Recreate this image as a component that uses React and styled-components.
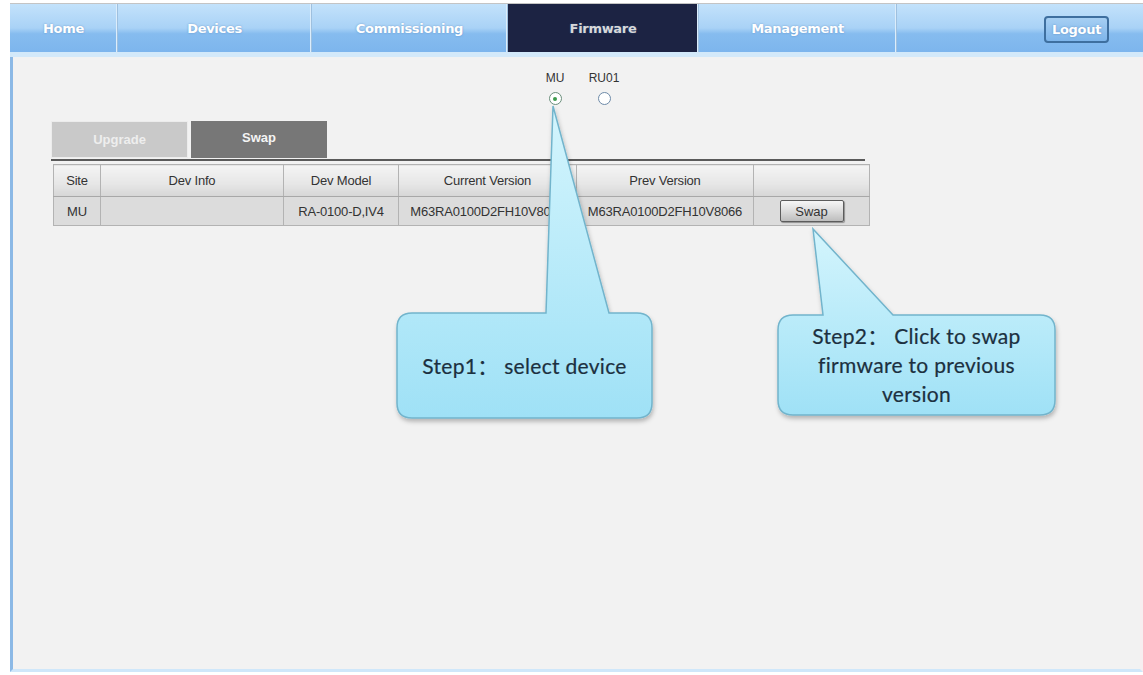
import React, { useState } from 'react';
import styled, { createGlobalStyle } from 'styled-components';

const GlobalStyle = createGlobalStyle`
  html, body {
    margin: 0;
    padding: 0;
    background: #ffffff;
  }
`;

const Page = styled.div`
  position: relative;
  width: 1143px;
  height: 675px;
  overflow: hidden;
  padding-top: 3px;
  box-sizing: border-box;
  font-family: "Liberation Sans", Arial, sans-serif;
`;

const NavBar = styled.div`
  display: flex;
  height: 48px;
  margin-left: 10px;
  border-top: 1px solid #c4c4c4;
  background: linear-gradient(#c3e2fb 0%, #a9d2f6 50%, #86bcef 62%, #7db5ed 100%);
`;

const NavItem = styled.div`
  width: ${p => p.w}px;
  display: flex;
  align-items: center;
  justify-content: center;
  border-right: 1px solid #9ec0df;
  box-shadow: inset -1px 0 0 #dcedfb;
  font-family: "DejaVu Sans", Verdana, sans-serif;
  font-weight: bold;
  font-size: 13px;
  letter-spacing: -0.3px;
  color: ${p => (p.active ? '#d8d8d8' : '#ffffff')};
  background: ${p => (p.active ? '#1c2343' : 'transparent')};
  text-shadow: 0 0 2px rgba(60, 110, 170, 0.6);
`;

const NavRest = styled.div`
  flex: 1;
  display: flex;
  align-items: center;
  justify-content: flex-end;
  padding-right: 34px;
`;

const LogoutButton = styled.button`
  width: 65px;
  height: 27px;
  border: 2px solid #3e6f9f;
  border-radius: 4px;
  background: linear-gradient(#a6cff3, #7eb5ea);
  color: #ffffff;
  font-family: "DejaVu Sans", Verdana, sans-serif;
  font-weight: bold;
  font-size: 13px;
  letter-spacing: -0.3px;
  padding: 0;
  text-shadow: 0 0 2px rgba(60, 110, 170, 0.6);
  margin-top: 2px;
`;

const Strip = styled.div`
  height: 5px;
  margin-left: 10px;
  background: #d3e9fa;
`;

const Panel = styled.div`
  margin-left: 10px;
  height: 615px;
  box-sizing: border-box;
  background: #f2f2f2;
  border-left: 3px solid #8cb9e6;
  border-right: 3px solid #f7eef0;
  border-bottom: 3px solid #cfe7fa;
  padding: 14px 0 0 38px;
  display: flex;
  flex-direction: column;
`;

const RadioGroup = styled.div`
  display: flex;
  gap: 19px;
  margin-left: 489px;
`;

const RadioOption = styled.label`
  width: 30px;
  display: flex;
  flex-direction: column;
  align-items: center;
  gap: 7px;
  font-size: 12px;
  color: #333;
  cursor: pointer;
`;

const RadioCircle = styled.span`
  width: 11px;
  height: 11px;
  border-radius: 50%;
  border: 1.5px solid ${p => (p.checked ? '#6b8f7c' : '#6d8aa8')};
  background: #ffffff;
  display: flex;
  align-items: center;
  justify-content: center;

  &::after {
    content: '';
    width: 4px;
    height: 4px;
    border-radius: 50%;
    background: ${p => (p.checked ? '#3d9a4c' : 'transparent')};
  }
`;

const TabRow = styled.div`
  display: flex;
  gap: 3px;
  margin-top: 16px;
  height: 37px;
`;

const Tab = styled.div`
  width: ${p => p.w}px;
  display: flex;
  align-items: center;
  justify-content: center;
  font-weight: bold;
  font-size: 13px;
  color: ${p => (p.active ? '#f4f4f4' : '#eeeeee')};
  background: ${p => (p.active ? '#777777' : '#c9c9c9')};
  box-sizing: border-box;
  border: ${p => (p.active ? 'none' : '1px solid #ececec')};
  padding-bottom: ${p => (p.active ? '4px' : '0')};
  cursor: pointer;
`;

const TabLine = styled.div`
  width: 814px;
  height: 2px;
  background: #5a5a5a;
  margin-top: 1px;
`;

const Table = styled.table`
  margin: 3px 0 0 2px;
  width: 816px;
  border-collapse: collapse;
  table-layout: fixed;
  font-size: 13px;
  letter-spacing: -0.2px;
  color: #333;
  border: 1px solid #b0b0b0;
`;

const Th = styled.th`
  height: 31px;
  font-weight: normal;
  background: linear-gradient(#f4f4f4, #e6e6e6 60%, #d6d6d6);
  border: 1px solid #b3b3b3;
  border-bottom: 1px solid #a8a8a8;
  padding: 0;
`;

const Td = styled.td`
  height: 28px;
  background: #dcdcdc;
  border: 1px solid #b3b3b3;
  text-align: center;
  padding: 0;
  white-space: nowrap;
  overflow: hidden;
`;

const SwapButton = styled.button`
  width: 64px;
  height: 22px;
  border: 1px solid #5c5c5c;
  border-radius: 2px;
  background: linear-gradient(#f6f6f6, #dcdcdc 50%, #bdbdbd);
  box-shadow: 1px 1px 1px rgba(0, 0, 0, 0.35);
  font-family: "Liberation Sans", Arial, sans-serif;
  font-size: 13px;
  color: #333;
  padding: 0;
  cursor: pointer;
`;

const Callout = styled.div`
  position: absolute;
  left: 0;
  top: 0;
  width: 1143px;
  height: 675px;
  pointer-events: none;
`;

const CalloutText = styled.div`
  position: absolute;
  left: ${p => p.x}px;
  top: ${p => p.y}px;
  width: ${p => p.w}px;
  height: ${p => p.h}px;
  display: flex;
  align-items: center;
  justify-content: center;
  text-align: center;
  font-family: Lato, "Open Sans", "Noto Sans CJK SC", sans-serif;
  font-size: 21px;
  line-height: 29px;
  color: #1c3040;
  letter-spacing: 0.3px;
  -webkit-text-stroke: 0.2px #1c3040;
`;

const navItems = [
  { label: 'Home', w: 107 },
  { label: 'Devices', w: 193 },
  { label: 'Commissioning', w: 195 },
  { label: 'Firmware', w: 190, active: true },
  { label: 'Management', w: 197 },
];

const row = {
  site: 'MU',
  info: '',
  model: 'RA-0100-D,IV4',
  current: 'M63RA0100D2FH10V8066',
  prev: 'M63RA0100D2FH10V8066',
};

const balloon = (x1, y1, x2, y2, r, b1, b2, tx, ty) =>
  `M ${x1 + r},${y1} L ${b1},${y1} L ${tx},${ty} L ${b2},${y1} L ${x2 - r},${y1} ` +
  `Q ${x2},${y1} ${x2},${y1 + r} L ${x2},${y2 - r} Q ${x2},${y2} ${x2 - r},${y2} ` +
  `L ${x1 + r},${y2} Q ${x1},${y2} ${x1},${y2 - r} L ${x1},${y1 + r} Q ${x1},${y1} ${x1 + r},${y1} Z`;

const App = () => {
  const [device, setDevice] = useState('MU');
  const [tab, setTab] = useState('Swap');

  return (
    <Page>
      <GlobalStyle />
      <NavBar>
        {navItems.map(item => (
          <NavItem key={item.label} w={item.w} active={item.active}>
            {item.label}
          </NavItem>
        ))}
        <NavRest>
          <LogoutButton>Logout</LogoutButton>
        </NavRest>
      </NavBar>
      <Strip />
      <Panel>
        <RadioGroup>
          {['MU', 'RU01'].map(d => (
            <RadioOption key={d} onClick={() => setDevice(d)}>
              {d}
              <RadioCircle checked={device === d} />
            </RadioOption>
          ))}
        </RadioGroup>
        <TabRow>
          <Tab w={137} active={tab === 'Upgrade'} onClick={() => setTab('Upgrade')}>Upgrade</Tab>
          <Tab w={136} active={tab === 'Swap'} onClick={() => setTab('Swap')}>Swap</Tab>
        </TabRow>
        <TabLine />
        <Table>
          <colgroup>
            <col style={{ width: 47 }} />
            <col style={{ width: 183 }} />
            <col style={{ width: 115 }} />
            <col style={{ width: 178 }} />
            <col style={{ width: 177 }} />
            <col style={{ width: 116 }} />
          </colgroup>
          <thead>
            <tr>
              <Th>Site</Th>
              <Th>Dev Info</Th>
              <Th>Dev Model</Th>
              <Th>Current Version</Th>
              <Th>Prev Version</Th>
              <Th />
            </tr>
          </thead>
          <tbody>
            <tr>
              <Td>{row.site}</Td>
              <Td>{row.info}</Td>
              <Td>{row.model}</Td>
              <Td>{row.current}</Td>
              <Td>{row.prev}</Td>
              <Td><SwapButton>Swap</SwapButton></Td>
            </tr>
          </tbody>
        </Table>
      </Panel>

      <Callout>
        <svg width="1143" height="675">
          <defs>
            <linearGradient id="bl" x1="0" y1="0" x2="0" y2="1">
              <stop offset="0" stopColor="#d4f5fd" />
              <stop offset="1" stopColor="#9fe1f6" />
            </linearGradient>
            <filter id="sh" x="-10%" y="-10%" width="120%" height="130%">
              <feDropShadow dx="1" dy="3" stdDeviation="2" floodColor="#000" floodOpacity="0.25" />
            </filter>
          </defs>
          <path
            d={balloon(397, 313, 652, 418, 15, 546, 609, 553, 106)}
            fill="url(#bl)"
            stroke="#72b4cc"
            strokeWidth="1.5"
            filter="url(#sh)"
          />
          <path
            d={balloon(778, 315, 1055, 415, 15, 823, 893, 813, 229)}
            fill="url(#bl)"
            stroke="#72b4cc"
            strokeWidth="1.5"
            filter="url(#sh)"
          />
        </svg>
        <CalloutText x={397} y={313} w={255} h={105}>Step1： select device</CalloutText>
        <CalloutText x={778} y={318} w={277} h={92}>
          Step2： Click to swap<br />firmware to previous<br />version
        </CalloutText>
      </Callout>
    </Page>
  );
};

export default App;
